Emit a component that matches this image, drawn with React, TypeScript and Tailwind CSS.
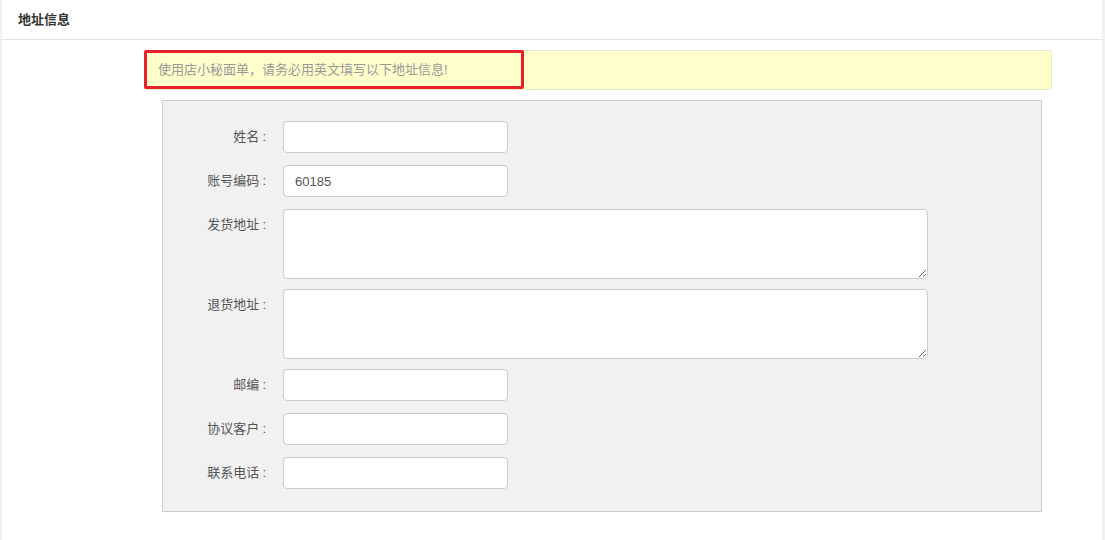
import React from "react";

const font = { fontFamily: '"Liberation Sans", "Noto Sans CJK SC", sans-serif' };

function InputRow({ label, value = "" }: { label: string; value?: string }) {
  return (
    <div className="flex items-center h-[32px]">
      <div className="w-[103px] text-right text-[13px] text-[#555]">
        {label}
        <span className="ml-[3px]">:</span>
      </div>
      <input
        defaultValue={value}
        className="ml-[17px] w-[225px] h-[32px] rounded-[4px] border border-[#cccccc] bg-white px-[11px] text-[13px] text-[#555] outline-none"
      />
    </div>
  );
}

function AreaRow({ label }: { label: string }) {
  return (
    <div className="flex items-start h-[70px]">
      <div className="w-[103px] text-right text-[13px] text-[#555] pt-[7px] leading-[18px]">
        {label}
        <span className="ml-[3px]">:</span>
      </div>
      <textarea className="ml-[17px] w-[645px] h-[70px] rounded-[4px] border border-[#cccccc] bg-white px-[11px] py-[6px] text-[13px] text-[#555] outline-none" />
    </div>
  );
}

export default function App() {
  return (
    <div className="w-full h-[540px] bg-[#f2f2f2] overflow-hidden" style={font}>
      <div className="ml-[2px] w-[1100px] h-[540px] bg-white">
        <div className="h-[40px] border-b border-[#e5e5e5] px-[16px] flex items-center">
          <span className="text-[13px] font-bold text-[#333]">地址信息</span>
        </div>
        <div className="pl-[142px] pt-[10px]">
          <div className="relative w-[908px] h-[40px] rounded-[3px] border border-[#e6e6c8] bg-[#ffffcc] flex items-center pl-[13px]">
            <span className="text-[13px] text-[#999]">使用店小秘面单，请务必用英文填写以下地址信息!</span>
            <div className="absolute left-[-1px] top-[-1px] w-[380px] h-[39px] border-[3px] border-[#e8202a] rounded-[2px]" />
          </div>
        </div>
        <div className="ml-[160px] mt-[10px] w-[880px] h-[412px] border border-[#cccccc] bg-[#f1f1f1] pt-[20px]">
          <div className="flex flex-col">
            <InputRow label="姓名" />
            <div className="h-[12px]" />
            <InputRow label="账号编码" value="60185" />
            <div className="h-[12px]" />
            <AreaRow label="发货地址" />
            <div className="h-[10px]" />
            <AreaRow label="退货地址" />
            <div className="h-[10px]" />
            <InputRow label="邮编" />
            <div className="h-[12px]" />
            <InputRow label="协议客户" />
            <div className="h-[12px]" />
            <InputRow label="联系电话" />
          </div>
        </div>
      </div>
    </div>
  );
}
